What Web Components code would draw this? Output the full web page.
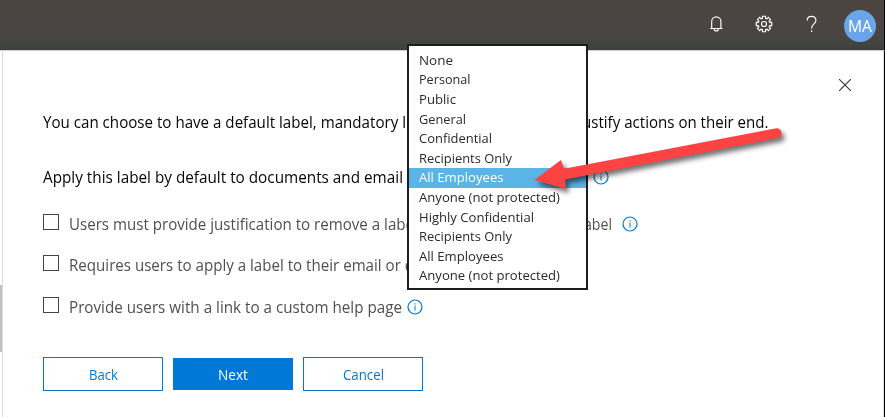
<!DOCTYPE html>
<html lang="en"><head><meta charset="utf-8"><title>Label policy settings</title>
<style>
html,body{margin:0;height:100%;overflow:hidden;background:#fff;font-family:"Open Sans","Noto Sans",sans-serif}
</style></head><body>
<policy-page></policy-page>
<script>
const define=(name,html,setup)=>customElements.define(name,class extends HTMLElement{
  connectedCallback(){
    if(this.shadowRoot)return;
    const t=document.createElement('template');t.innerHTML=html;
    this.attachShadow({mode:'open'}).append(t.content.cloneNode(true));
    if(setup)setup(this,this.shadowRoot);
  }
});

// A single line of text condensed to occupy the width given by its "w" attribute.
define('fit-text',`<style>:host{display:block;white-space:pre;flex:none}span{display:inline-block;transform-origin:0 50%}</style><span><slot></slot></span>`,(el,root)=>{
  const s=root.querySelector('span'),w=+el.getAttribute('w');
  el.style.width=w+'px';
  s.style.transform='scaleX('+w/s.getBoundingClientRect().width+')';
});

define('info-icon',`<style>:host{display:block;width:16px;height:16px;flex:none}svg{display:block}</style>
<svg width="16" height="16" viewBox="0 0 16 16" fill="none" stroke="#0078d7"><circle cx="8" cy="8" r="7" stroke-width="1.2"/><path d="M8 6.6V11.5M8 4.3v1.2"/></svg>`);

define('check-row',`<style>:host{display:flex;height:22px;color:#505050;line-height:22px}
i{box-sizing:border-box;width:16px;height:16px;border:1px solid #444;margin:1px 10px 0 0;flex:none}</style><i></i><slot></slot>`);

define('action-button',`<style>:host{box-sizing:border-box;width:120px;height:34px;border:1px solid #0078d7;display:flex;justify-content:center;align-items:center;color:#0078d7;font-size:13.6px;padding-top:2px}
:host([primary]){background:#0078d7;color:#fff;height:32px}</style><slot></slot>`);

define('label-option',`<style>:host{display:block;height:19.6px;line-height:19.6px;padding-left:10px;color:#2a2a2a;font-size:13.5px}
:host([selected]){background:#5ab4e6;color:#fff}</style><slot></slot>`);

define('label-menu',`<style>:host{box-sizing:border-box;display:block;width:181px;height:246px;border:2px solid #1d1d1f;background:#fff;padding-top:4.8px}</style><slot></slot>`);

define('top-bar',`<style>:host{box-sizing:border-box;height:51px;background:linear-gradient(#4b4542 0,#4a4542 34px,#424541 42px,#40403a 50px);border-bottom:1px solid #d2cccb;border-right:1px solid #000;display:flex;justify-content:flex-end;align-items:flex-start;padding:10px 8px 0 0}
svg{display:block;flex:none}
.a{width:32px;height:32px;border-radius:50%;background:#69a5e8;color:#fff;display:flex;align-items:center;justify-content:center;font-size:15.5px;flex:none}</style>
<svg width="176" height="32" viewBox="700 10 176 32" style="width:144px" fill="none" stroke="#fff" stroke-width="1.15" preserveAspectRatio="xMinYMin slice">
<path d="M710 28.5h12.5M711.7 28.5V21.5a4.6 4.6 0 0 1 9.2 0v7M714.3 29a2 2 0 0 0 4 0"/>
<circle cx="764" cy="24" r="2.5"/>
<path id="g"/>
<path d="M807.2 20.6c0-2.8 1.8-4.2 4.3-4.2s4.4 1.5 4.4 4c0 3.6-4.3 3.6-4.3 8M811.6 30.2v1.8"/></svg>
<div class="a"><fit-text w="24">MA</fit-text></div>`,(el,root)=>{
  // Gear outline: eight teeth around the centre.
  const p=[];
  for(let k=0;k<8;k++)for(const [a,r] of [[-.27,5.9],[-.2,7.9],[.2,7.9],[.27,5.9]]){
    const t=k*Math.PI/4+a;p.push((764+r*Math.cos(t)).toFixed(2)+' '+(24+r*Math.sin(t)).toFixed(2));
  }
  root.querySelector('#g').setAttribute('d','M'+p.join('L')+'Z');
});

define('policy-page',`<style>
:host{display:grid;grid-template-rows:51px 366px;width:885px;height:417px;position:relative;overflow:hidden}
main{display:grid;grid-template-columns:3px 1fr 2px;background:#fff}
.rail{border-right:1px solid #dcdadd;padding-top:234px}
.thumb{height:67px;background:#c1bfc3}
.edge{border-left:1px solid #ddd;background:#000}
.form{display:flex;flex-direction:column;padding-left:40px;font-size:15.6px;line-height:22px;color:#050505}
.close{align-self:flex-end;margin:28px 32px 0 0;height:12px}
.close svg{display:block}
.line{display:flex;height:22px}
.one{margin-top:20px}.two{margin-top:33px}
.c1{margin-top:25px}.c2{margin-top:19px}.c3{margin-top:20px}
.buttons{display:flex;gap:10px;align-items:center;margin-top:39px;height:34px}
.gap{flex:none}
label-menu{position:absolute;left:407px;top:44px}
.arrow{position:absolute;left:520px;top:110px;overflow:visible}
</style>
<top-bar></top-bar>
<main><div class="rail"><div class="thumb"></div></div>
<div class="form">
<div class="close"><svg width="12" height="12" viewBox="0 0 12 12" stroke="#333" stroke-width="1.1"><path d="M0 0 12 12M12 0 0 12"/></svg></div>
<div class="line one"><fit-text w="363">You can choose to have a default label, mandatory l</fit-text><div class="gap" style="width:176px"></div><fit-text w="186.5">ustify actions on their end.</fit-text></div>
<div class="line two"><fit-text w="360">Apply this label by default to documents and email</fit-text><div class="gap" style="width:190px"></div><info-icon style="margin-top:3px"></info-icon></div>
<check-row class="c1"><fit-text w="345">Users must provide justification to remove a labe</fit-text><div class="gap" style="width:169.5px"></div><fit-text w="28">abel</fit-text><info-icon style="margin:3px 0 0 10px"></info-icon></check-row>
<check-row class="c2"><fit-text w="345">Requires users to apply a label to their email or d</fit-text></check-row>
<check-row class="c3"><fit-text w="333">Provide users with a link to a custom help page</fit-text><info-icon style="margin:2.5px 0 0 5px"></info-icon></check-row>
<div class="buttons"><action-button><fit-text w="29">Back</fit-text></action-button><action-button primary><fit-text w="30">Next</fit-text></action-button><action-button><fit-text w="41">Cancel</fit-text></action-button></div>
</div><div class="edge"></div></main>
<label-menu>
<label-option><fit-text w="34">None</fit-text></label-option>
<label-option><fit-text w="51.5">Personal</fit-text></label-option>
<label-option><fit-text w="37">Public</fit-text></label-option>
<label-option><fit-text w="47">General</fit-text></label-option>
<label-option><fit-text w="73">Confidential</fit-text></label-option>
<label-option><fit-text w="93">Recipients Only</fit-text></label-option>
<label-option selected><fit-text w="84.5">All Employees</fit-text></label-option>
<label-option><fit-text w="141">Anyone (not protected)</fit-text></label-option>
<label-option><fit-text w="115">Highly Confidential</fit-text></label-option>
<label-option><fit-text w="93">Recipients Only</fit-text></label-option>
<label-option><fit-text w="84.5">All Employees</fit-text></label-option>
<label-option><fit-text w="141">Anyone (not protected)</fit-text></label-option>
</label-menu>
<svg class="arrow" width="280" height="100" viewBox="520 110 280 100"><path fill="#ff4343" style="filter:drop-shadow(3px 4px 2.5px rgba(0,0,0,.55))" d="M534.3 180 561 160 564.2 168.8 776.5 128.2A5 5 0 0 1 778.5 137.8L565 179.5 566 189Z"/></svg>`);
</script></body></html>
